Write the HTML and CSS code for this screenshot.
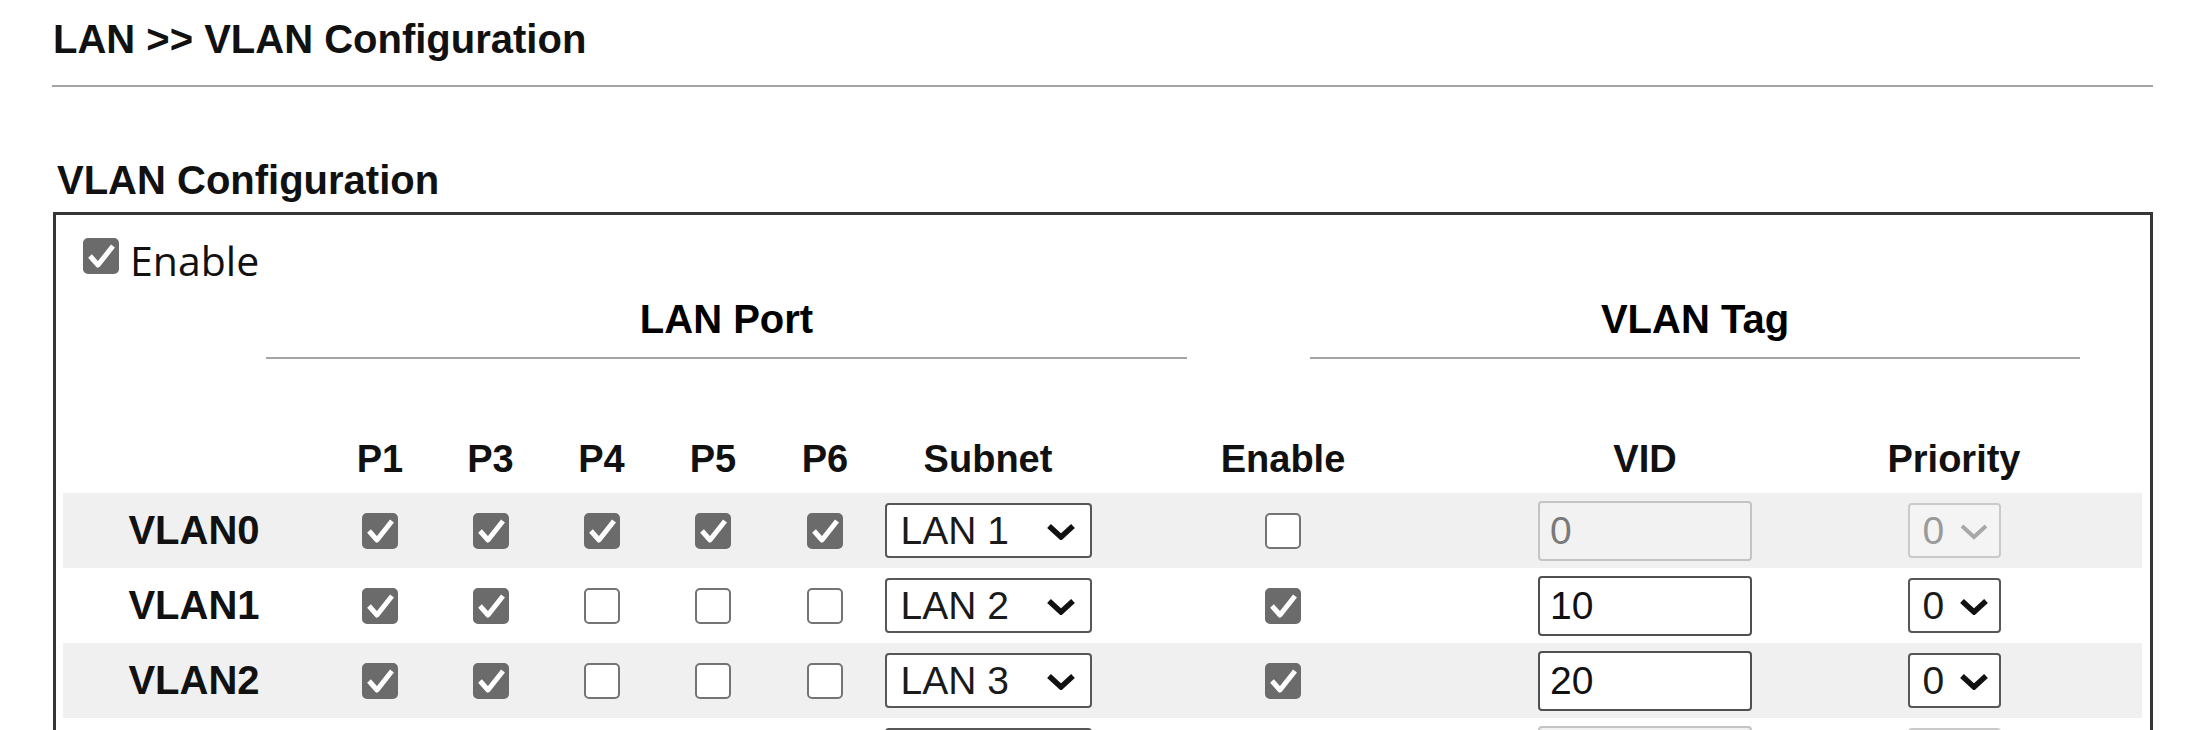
FILE: index.html
```html
<!DOCTYPE html>
<html lang="en">
<head>
<meta charset="utf-8">
<title>LAN &gt;&gt; VLAN Configuration</title>
<link rel="stylesheet" href="styles.css">
</head>
<body>
<div class="page">
  <h1 class="title">LAN &gt;&gt; VLAN Configuration</h1>
  <hr class="rule">
  <h2 class="heading">VLAN Configuration</h2>
  <div class="box">
    <div class="enable-row">
      <span class="cb on"><svg viewBox="0 0 32 32"><path d="M5 16 L13 25 L28 6"/></svg></span>
      <span class="enable-text">Enable</span>
    </div>
    <div class="groups">
      <div class="grp grp-lan">LAN Port</div>
      <div class="grp grp-tag">VLAN Tag</div>
    </div>
    <table class="vlan">
      <colgroup>
        <col class="c-label"><col class="c-p1"><col class="c-p3"><col class="c-p4"><col class="c-p5"><col class="c-p6">
        <col class="c-subnet"><col class="c-enable"><col class="c-vid"><col class="c-prio"><col class="c-end">
      </colgroup>
      <thead>
        <tr>
          <th></th><th>P1</th><th>P3</th><th>P4</th><th>P5</th><th>P6</th>
          <th>Subnet</th><th>Enable</th><th>VID</th><th>Priority</th><th></th>
        </tr>
      </thead>
      <tbody>
        <tr>
          <td class="label">VLAN0</td>
          <td><span class="cb on"><svg viewBox="0 0 32 32"><path d="M5 16 L13 25 L28 6"/></svg></span></td>
          <td><span class="cb on"><svg viewBox="0 0 32 32"><path d="M5 16 L13 25 L28 6"/></svg></span></td>
          <td><span class="cb on"><svg viewBox="0 0 32 32"><path d="M5 16 L13 25 L28 6"/></svg></span></td>
          <td><span class="cb on"><svg viewBox="0 0 32 32"><path d="M5 16 L13 25 L28 6"/></svg></span></td>
          <td><span class="cb on"><svg viewBox="0 0 32 32"><path d="M5 16 L13 25 L28 6"/></svg></span></td>
          <td><div class="sel sel-subnet"><span>LAN 1</span><svg class="chev" viewBox="0 0 30 18"><path d="M3 4 L15 15 L27 4"/></svg></div></td>
          <td><span class="cb"></span></td>
          <td><input class="vid" type="text" value="0" disabled></td>
          <td><div class="sel sel-prio is-disabled"><span>0</span><svg class="chev" viewBox="0 0 30 18"><path d="M3 4 L15 15 L27 4"/></svg></div></td>
          <td></td>
        </tr>
        <tr>
          <td class="label">VLAN1</td>
          <td><span class="cb on"><svg viewBox="0 0 32 32"><path d="M5 16 L13 25 L28 6"/></svg></span></td>
          <td><span class="cb on"><svg viewBox="0 0 32 32"><path d="M5 16 L13 25 L28 6"/></svg></span></td>
          <td><span class="cb"></span></td>
          <td><span class="cb"></span></td>
          <td><span class="cb"></span></td>
          <td><div class="sel sel-subnet"><span>LAN 2</span><svg class="chev" viewBox="0 0 30 18"><path d="M3 4 L15 15 L27 4"/></svg></div></td>
          <td><span class="cb on"><svg viewBox="0 0 32 32"><path d="M5 16 L13 25 L28 6"/></svg></span></td>
          <td><input class="vid" type="text" value="10"></td>
          <td><div class="sel sel-prio"><span>0</span><svg class="chev" viewBox="0 0 30 18"><path d="M3 4 L15 15 L27 4"/></svg></div></td>
          <td></td>
        </tr>
        <tr>
          <td class="label">VLAN2</td>
          <td><span class="cb on"><svg viewBox="0 0 32 32"><path d="M5 16 L13 25 L28 6"/></svg></span></td>
          <td><span class="cb on"><svg viewBox="0 0 32 32"><path d="M5 16 L13 25 L28 6"/></svg></span></td>
          <td><span class="cb"></span></td>
          <td><span class="cb"></span></td>
          <td><span class="cb"></span></td>
          <td><div class="sel sel-subnet"><span>LAN 3</span><svg class="chev" viewBox="0 0 30 18"><path d="M3 4 L15 15 L27 4"/></svg></div></td>
          <td><span class="cb on"><svg viewBox="0 0 32 32"><path d="M5 16 L13 25 L28 6"/></svg></span></td>
          <td><input class="vid" type="text" value="20"></td>
          <td><div class="sel sel-prio"><span>0</span><svg class="chev" viewBox="0 0 30 18"><path d="M3 4 L15 15 L27 4"/></svg></div></td>
          <td></td>
        </tr>
        <tr class="row-partial">
          <td></td>
          <td></td><td></td><td></td><td></td><td></td>
          <td><div class="sel sel-subnet"></div></td>
          <td></td>
          <td><input class="vid" type="text" value="" disabled></td>
          <td><div class="sel sel-prio is-disabled"></div></td>
          <td></td>
        </tr>
      </tbody>
    </table>
  </div>
</div>
</body>
</html>
```
FILE: styles.css
```css
html, body {
  margin: 0;
  padding: 0;
  background: #ffffff;
  overflow: hidden;
}

body {
  font-family: "Liberation Sans", Arial, sans-serif;
  color: #000;
}

.page {
  padding: 16px 40px 0 52px;
}

.title {
  margin: 0;
  padding-left: 1px;
  font-size: 40px;
  line-height: 46px;
  font-weight: bold;
  color: #111;
}

.rule {
  margin: 23px 0 0;
  border: 0;
  height: 2px;
  background: #a4a4a4;
}

.heading {
  margin: 70px 0 0;
  padding-left: 5px;
  font-size: 40px;
  line-height: 46px;
  font-weight: bold;
  color: #111;
}

.box {
  margin: 9px 0 0 1px;
  border: 3px solid #363636;
  border-bottom: 0;
  padding: 0 8px 40px 7px;
}

.enable-row {
  display: flex;
  align-items: center;
  height: 36px;
  margin: 23px 0 0 20px;
}

.enable-text {
  margin-left: 11px;
  font-family: "Open Sans", "Noto Sans", sans-serif;
  font-size: 41px;
  line-height: 36px;
  padding-top: 7px;
  color: #111;
}

.groups {
  display: flex;
  margin-top: 22px;
  padding-left: 203px;
}

.grp {
  text-align: center;
  font-size: 40px;
  line-height: 46px;
  font-weight: bold;
  padding-bottom: 15px;
  border-bottom: 2px solid #a4a4a4;
}

.grp-lan { width: 921px; }
.grp-tag { width: 770px; margin-left: 123px; }

.vlan {
  width: 2079px;
  table-layout: fixed;
  border-collapse: collapse;
  border-spacing: 0;
}

.c-label { width: 262px; }
.c-p1 { width: 110px; }
.c-p3 { width: 111px; }
.c-p4 { width: 111px; }
.c-p5 { width: 112px; }
.c-p6 { width: 112px; }
.c-subnet { width: 214px; }
.c-enable { width: 376px; }
.c-vid { width: 348px; }
.c-prio { width: 270px; }
.c-end { width: 53px; }

.vlan thead tr { height: 134px; }

.vlan th {
  padding: 0 0 11px;
  vertical-align: bottom;
  text-align: center;
  font-size: 38px;
  line-height: 45px;
  font-weight: bold;
  color: #111;
}

.vlan tbody tr { height: 75px; }
.vlan tbody tr:nth-child(odd) { background: #f0f0f0; }

.vlan td {
  padding: 0;
  text-align: center;
  vertical-align: middle;
}

.vlan td.label {
  font-size: 40px;
  font-weight: bold;
  color: #111;
}

.cb {
  display: inline-block;
  box-sizing: border-box;
  width: 36px;
  height: 36px;
  border: 2px solid #747474;
  border-radius: 5px;
  background: #fff;
  vertical-align: middle;
}

.cb.on {
  background: #6b6b6b;
  border-color: #6b6b6b;
}

.cb svg {
  display: block;
  width: 32px;
  height: 32px;
}

.cb svg path {
  fill: none;
  stroke: #fff;
  stroke-width: 5;
  stroke-linejoin: round;
}

.sel {
  display: inline-flex;
  align-items: center;
  justify-content: space-between;
  box-sizing: border-box;
  height: 55px;
  border: 2px solid #575757;
  border-radius: 4px;
  background: #fff;
  vertical-align: middle;
  font-size: 39px;
  color: #1a1a1a;
  text-align: left;
}

.sel-subnet {
  width: 207px;
  padding: 0 14px 0 14px;
}

.sel-prio {
  width: 93px;
  padding: 0 10px 0 13px;
}

.chev {
  width: 30px;
  height: 18px;
  flex: none;
}

.chev path {
  fill: none;
  stroke: #111;
  stroke-width: 5.5;
}

.sel.is-disabled {
  border-color: #cacaca;
  background: #f4f4f4;
  color: #9a9a9a;
}

.sel.is-disabled .chev path {
  stroke: #a8a8a8;
  stroke-width: 4;
}

.vid {
  box-sizing: border-box;
  width: 214px;
  height: 60px;
  margin: 0;
  padding: 0 10px;
  border: 2px solid #505050;
  border-radius: 4px;
  background: #fff;
  font-family: "Liberation Sans", Arial, sans-serif;
  font-size: 39px;
  color: #111;
  vertical-align: middle;
}

.vid:disabled {
  border-color: #c4c4c4;
  background: #f2f2f2;
  color: #7a7a7a;
}
```
